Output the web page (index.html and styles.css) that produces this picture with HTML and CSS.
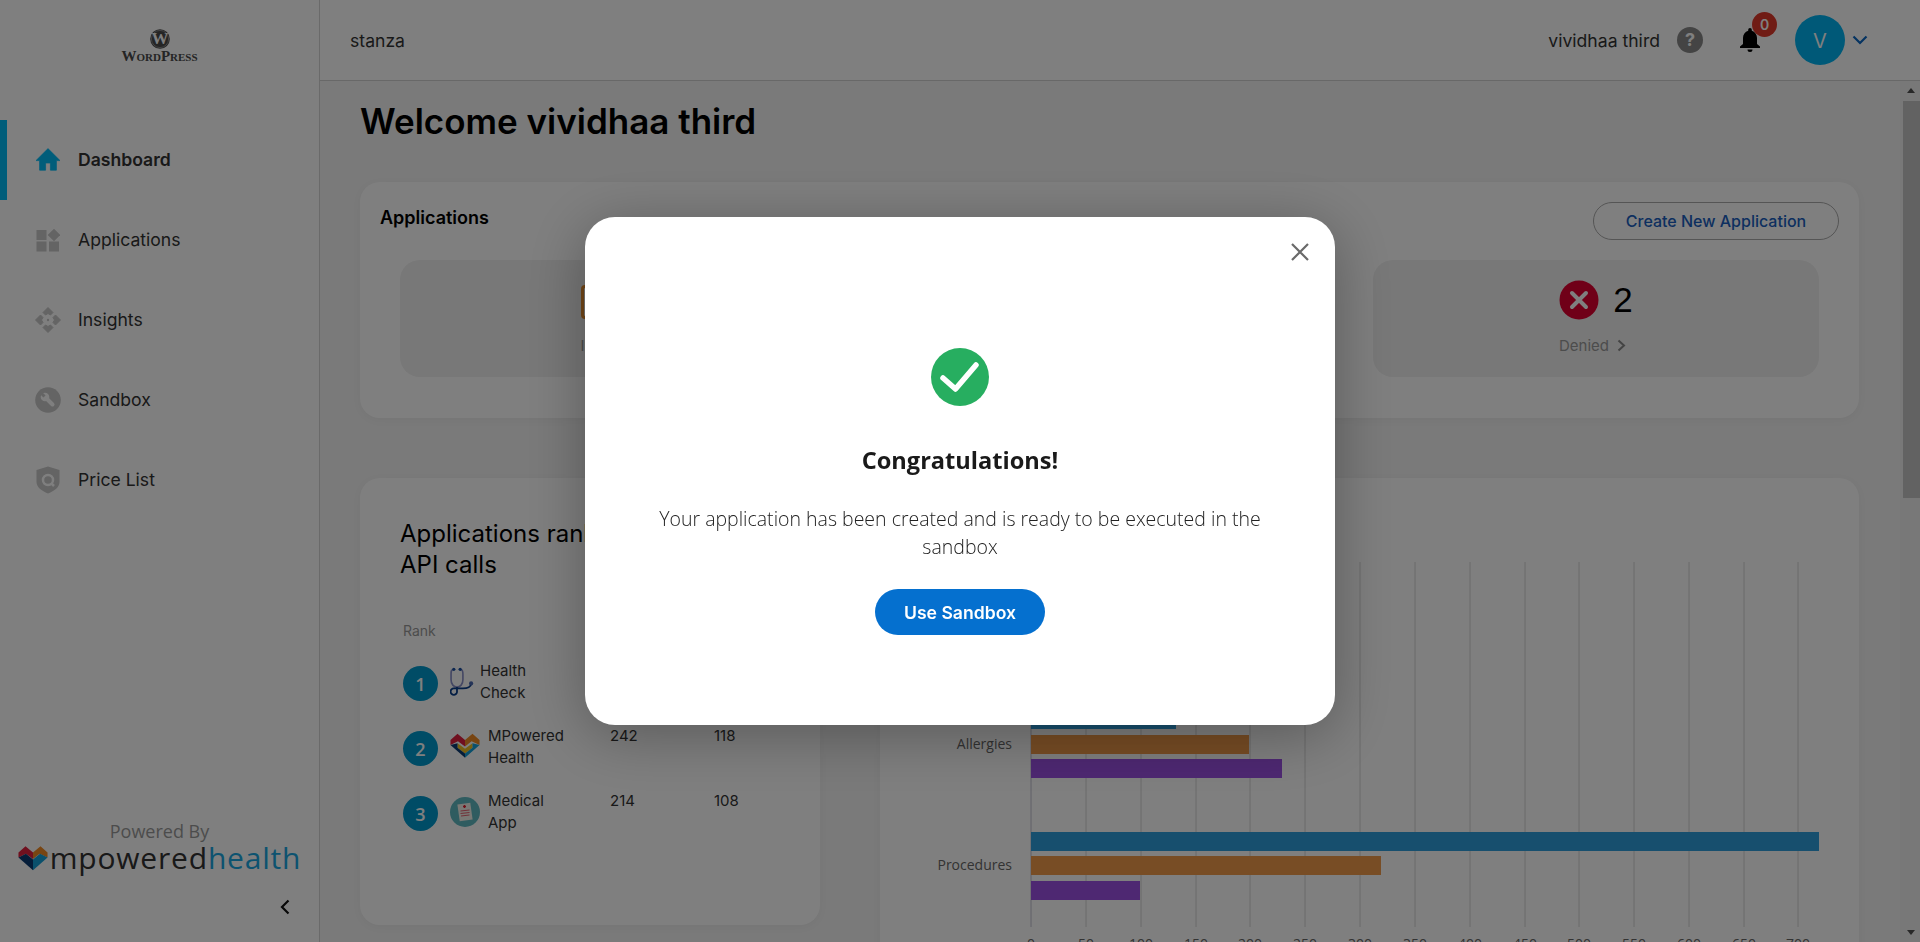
FILE: index.html
```html
<!DOCTYPE html>
<html lang="en">
<head>
    <meta charset="UTF-8">
    <meta name="viewport" content="width=device-width, initial-scale=1.0">
    <title>Dashboard</title>
    <link rel="stylesheet" href="styles.css">
</head>
<body>
    <div class="app">
        <aside class="sidebar">
            <div class="brand">
                <svg class="brand-mark" width="20" height="20" viewBox="0 0 20 20">
                    <circle cx="10" cy="10" r="9.8" fill="#4a4a4a"/>
                    <circle cx="10" cy="10" r="8.6" fill="none" stroke="#a0a0a0" stroke-width="0.7"/>
                    <text x="10" y="15.4" text-anchor="middle" class="brand-w">W</text>
                </svg>
                <span class="brand-name">WordPress</span>
            </div>

            <nav class="nav">
                <a class="nav-item active">
                    <svg class="nav-icon" width="24" height="24" viewBox="2 2 20 20"><path d="M10 20.500v-6h4v6h5v-8h3L12 2.500 2 12.500h3v8z" fill="currentColor" stroke="currentColor" stroke-width="0.6" stroke-linejoin="round"/></svg>
                    <span>Dashboard</span>
                </a>
                <a class="nav-item">
                    <svg class="nav-icon" width="24" height="24" viewBox="0 0 24 24" fill="currentColor">
                        <rect x="0.500" y="2" width="10" height="10"/>
                        <rect x="0.500" y="13.500" width="10" height="10"/>
                        <rect x="13" y="13.500" width="10" height="10"/>
                        <rect x="13.500" y="2.500" width="9" height="9" transform="rotate(45 18 7)"/>
                    </svg>
                    <span>Applications</span>
                </a>
                <a class="nav-item">
                    <svg class="nav-icon wide-icon" width="26" height="26" viewBox="0 0 26 26" fill="currentColor">
                        <path d="M13 0.500 18 5.500 15.500 8 13 6.500 10.500 8 8 5.500z" stroke="currentColor" stroke-linejoin="round"/>
                        <path d="M13 25.500 18 20.500 15.500 18 13 19.500 10.500 18 8 20.500z" stroke="currentColor" stroke-linejoin="round"/>
                        <path d="M0.500 13 5.500 8 8 10.500 6.500 13 8 15.500 5.500 18z" stroke="currentColor" stroke-linejoin="round"/>
                        <path d="M25.500 13 20.500 8 18 10.500 19.500 13 18 15.500 20.500 18z" stroke="currentColor" stroke-linejoin="round"/>
                        <circle cx="13" cy="13" r="1.200"/>
                    </svg>
                    <span>Insights</span>
                </a>
                <a class="nav-item">
                    <svg class="nav-icon wide-icon" width="26" height="26" viewBox="0 0 26 26">
                        <circle cx="13" cy="13" r="12.800" fill="currentColor"/>
                        <path d="M11 11 17.500 17.500" stroke="#fff" stroke-width="4" stroke-linecap="round"/>
                        <circle cx="10" cy="10" r="4.300" fill="#fff"/>
                        <path d="M6 6 9.500 9.500" stroke="currentColor" stroke-width="3"/>
                    </svg>
                    <span>Sandbox</span>
                </a>
                <a class="nav-item">
                    <svg class="nav-icon" width="24" height="28" viewBox="0 0 24 28">
                        <path d="M12 0.500 23.500 4v12c0 5-5 9-11.500 11.500C5.500 25 0.500 21 0.500 16V4z" fill="currentColor"/>
                        <circle cx="12" cy="14" r="5" fill="none" stroke="#fff" stroke-width="2.500"/>
                        <path d="M15.500 17.500 18 20" stroke="#fff" stroke-width="2.500"/>
                    </svg>
                    <span>Price List</span>
                </a>
            </nav>

            <div class="powered">
                <div class="powered-label">Powered By</div>
                <div class="powered-logo">
                    <svg width="30" height="26" viewBox="0 0 32 27">
                        <path d="M0.500 7.500 8 1l8 6.500v7L8.500 9 0.500 13z" fill="#e0203f"/>
                        <path d="M31.500 7.500 24 1l-8 6.500v7l7-5.500 8.500 4z" fill="#f08a24"/>
                        <path d="M0.500 13 8.500 9l7.500 6v11.500z" fill="#0b3a72"/>
                        <path d="M31.500 13 23.500 9l-7.500 6v11.500z" fill="#14a0d8"/>
                    </svg>
                    <span class="logo-dark">mpowered</span><span class="logo-blue">health</span>
                </div>
            </div>
            <div class="collapse">
                <svg width="12" height="16" viewBox="0 0 12 16"><path d="M9.500 1.500 3 8l6.500 6.500" fill="none" stroke="#111" stroke-width="2.200"/></svg>
            </div>
        </aside>

        <div class="right">
            <header class="topbar">
                <span class="org">stanza</span>
                <div class="topbar-right">
                    <span class="user-name">vividhaa third</span>
                    <span class="help">?</span>
                    <span class="bell">
                        <svg width="20" height="26" viewBox="0 0 20 26"><path d="M10 1a1.800 1.800 0 0 1 1.800 1.800v1C15 4.800 17 7.500 17 11v6l3 2.500V21H0v-1.500L3 17v-6c0-3.500 2-6.200 5.200-7.200v-1A1.800 1.800 0 0 1 10 1zM7.500 22.500h5a2.500 2.500 0 0 1-5 0z" fill="#000"/></svg>
                        <span class="badge">0</span>
                    </span>
                    <span class="avatar">V</span>
                    <svg class="avatar-caret" width="16" height="10" viewBox="0 0 16 10"><path d="M1.500 1.500 8 8l6.500-6.500" fill="none" stroke="#0a66c2" stroke-width="2.200"/></svg>
                </div>
            </header>

            <div class="content-wrap">
                <main class="content">
                    <h1>Welcome vividhaa third</h1>

                    <section class="card apps-card">
                        <div class="apps-head">
                            <h2>Applications</h2>
                            <button class="outline-btn">Create New Application</button>
                        </div>
                        <div class="tiles">
                            <div class="tile">
                                <div class="tile-top">
                                    <span class="pending-icon"></span>
                                </div>
                                <div class="tile-label pending-label">In Review
                                    <svg width="9" height="13" viewBox="0 0 9 13"><path d="M1.500 1.500 7 6.500l-5.500 5" fill="none" stroke="#888" stroke-width="2"/></svg>
                                </div>
                            </div>
                            <div class="tile"></div>
                            <div class="tile">
                                <div class="tile-top">
                                    <svg width="40" height="40" viewBox="0 0 40 40">
                                        <circle cx="20" cy="20" r="19.500" fill="#e00030"/>
                                        <path d="M13 13 27 27M27 13 13 27" stroke="#fff" stroke-width="4" stroke-linecap="round"/>
                                    </svg>
                                    <span class="tile-count">2</span>
                                </div>
                                <div class="tile-label denied-label">Denied
                                    <svg width="9" height="13" viewBox="0 0 9 13"><path d="M1.500 1.500 7 6.500l-5.500 5" fill="none" stroke="#888" stroke-width="2"/></svg>
                                </div>
                            </div>
                        </div>
                    </section>

                    <div class="lower">
                        <section class="card rank-card">
                            <h3>Applications ranked by<br>API calls</h3>
                            <div class="rank-head">Rank</div>
                            <div class="rank-row">
                                <span class="rank-num">1</span>
                                <svg class="rank-icon" width="24" height="31" viewBox="0 0 26 34" fill="none">
                                    <path d="M3 3C1 3 1 5 1 8v6c0 5 3 8 6.500 8S14 19 14 14V8c0-3 0-5-2-5" stroke="#8a90c8" stroke-width="1.800"/>
                                    <circle cx="4" cy="2.500" r="1.800" fill="#1a4fa0"/><circle cx="11" cy="2.500" r="1.800" fill="#1a4fa0"/>
                                    <path d="M7.500 22v4.500a3.500 3.500 0 1 1-3.500-3h10c5 0 9-2 9-5" stroke="#0b3f8a" stroke-width="2"/>
                                    <circle cx="23" cy="18" r="2.300" fill="#4a68b0"/>
                                </svg>
                                <span class="rank-name">Health<br>Check</span>
                            </div>
                            <div class="rank-row">
                                <span class="rank-num">2</span>
                                <svg class="rank-icon" width="30" height="27" viewBox="0 0 32 27">
                                    <path d="M0.500 7.500 8 1l8 6.500v7L8.500 9 0.500 13z" fill="#e0203f"/>
                                    <path d="M31.500 7.500 24 1l-8 6.500v7l7-5.500 8.500 4z" fill="#f08a24"/>
                                    <path d="M8 11l8 6 8-6v5l-8 6-8-6z" fill="#f0c020"/>
                                    <path d="M0.500 13 8 11v5l8 6v4.500z" fill="#0b3a72"/>
                                    <path d="M31.500 13 24 11v5l-8 6v4.500z" fill="#14a0d8"/>
                                </svg>
                                <span class="rank-name wide">MPowered<br>Health</span>
                                <span class="rank-val">242</span>
                                <span class="rank-val">118</span>
                            </div>
                            <div class="rank-row">
                                <span class="rank-num">3</span>
                                <svg class="rank-icon" width="30" height="30" viewBox="0 0 30 30">
                                    <circle cx="15" cy="15" r="15" fill="#5fb8c0"/>
                                    <rect x="8.500" y="6.500" width="13" height="17" fill="#f2f2ea" transform="rotate(-8 15 15)"/>
                                    <path d="M13 9.500h3M14.500 8v3" stroke="#e02030" stroke-width="1.300"/>
                                    <path d="M10.500 14l9-1M10.500 16.500l9-1M11 19l8.500-1" stroke="#e05060" stroke-width="0.900"/>
                                </svg>
                                <span class="rank-name wide">Medical<br>App</span>
                                <span class="rank-val">214</span>
                                <span class="rank-val">108</span>
                            </div>
                        </section>

                        <section class="card chart-card">
                            <svg class="chart" width="979" height="500" viewBox="0 0 979 500">
                                <g class="grid">
                                    <line x1="206" x2="206" y1="84" y2="449"/><line x1="261" x2="261" y1="84" y2="449"/>
                                    <line x1="316" x2="316" y1="84" y2="449"/><line x1="370" x2="370" y1="84" y2="449"/>
                                    <line x1="425" x2="425" y1="84" y2="449"/><line x1="480" x2="480" y1="84" y2="449"/>
                                    <line x1="535" x2="535" y1="84" y2="449"/><line x1="590" x2="590" y1="84" y2="449"/>
                                    <line x1="645" x2="645" y1="84" y2="449"/><line x1="699" x2="699" y1="84" y2="449"/>
                                    <line x1="754" x2="754" y1="84" y2="449"/><line x1="809" x2="809" y1="84" y2="449"/>
                                    <line x1="864" x2="864" y1="84" y2="449"/><line x1="918" x2="918" y1="84" y2="449"/>
                                </g>
                                <line class="axis" x1="151" x2="151" y1="84" y2="449"/>
                                <rect class="bar-blue" x="151" y="232" width="145" height="19"/>
                                <rect class="bar-orange" x="151" y="257" width="218" height="19"/>
                                <rect class="bar-purple" x="151" y="281" width="251" height="19"/>
                                <rect class="bar-blue" x="151" y="354" width="788" height="19"/>
                                <rect class="bar-orange" x="151" y="378" width="350" height="19"/>
                                <rect class="bar-purple" x="151" y="403" width="109" height="19"/>
                                <text class="cat" x="132" y="271" text-anchor="end">Allergies</text>
                                <text class="cat" x="132" y="392" text-anchor="end">Procedures</text>
                                <g class="tick" text-anchor="middle">
                                    <text x="151" y="471">0</text><text x="206" y="471">50</text><text x="261" y="471">100</text>
                                    <text x="316" y="471">150</text><text x="370" y="471">200</text><text x="425" y="471">250</text>
                                    <text x="480" y="471">300</text><text x="535" y="471">350</text><text x="590" y="471">400</text>
                                    <text x="645" y="471">450</text><text x="699" y="471">500</text><text x="754" y="471">550</text>
                                    <text x="809" y="471">600</text><text x="864" y="471">650</text><text x="918" y="471">700</text>
                                </g>
                            </svg>
                        </section>
                    </div>
                </main>

                <div class="scrollbar">
                    <span class="arrow-up"></span>
                    <div class="thumb"></div>
                    <span class="arrow-down"></span>
                </div>
            </div>
        </div>
    </div>

    <div class="overlay">
        <div class="modal">
            <button class="modal-close">
                <svg width="20" height="20" viewBox="0 0 20 20"><path d="M2 2 18 18M18 2 2 18" stroke="#6a6a6a" stroke-width="2.200"/></svg>
            </button>
            <svg class="modal-check" width="58" height="58" viewBox="0 0 58 58">
                <circle cx="29" cy="29" r="29" fill="#27ae60"/>
                <path d="M12 30 24.500 41 45 17" fill="none" stroke="#fff" stroke-width="5.500" stroke-linecap="round" stroke-linejoin="round"/>
            </svg>
            <h2 class="modal-title">Congratulations!</h2>
            <p class="modal-text">Your application has been created and is ready to be executed in the sandbox</p>
            <button class="primary-btn">Use Sandbox</button>
        </div>
    </div>
</body>
</html>
```

FILE: styles.css
```css
* {
    box-sizing: border-box;
}
html, body {
    margin: 0;
    height: 100%;
    overflow: hidden;
}
body {
    font-family: Inter, "Noto Sans", sans-serif;
    color: #333;
    background: #f4f4f4;
}
h1, h2, h3, p {
    margin: 0;
}
.app {
    display: flex;
    height: 100vh;
}

/* sidebar */
.sidebar {
    width: 320px;
    flex: none;
    background: #fff;
    border-right: 1px solid #d4d4d4;
    display: flex;
    flex-direction: column;
}
.brand {
    height: 120px;
    padding-top: 29px;
    display: flex;
    flex-direction: column;
    align-items: center;
}
.brand-w {
    font-family: "Liberation Serif", serif;
    font-size: 17px;
    font-weight: bold;
    fill: #fff;
}
.brand-name {
    font-family: "Liberation Serif", serif;
    font-variant: small-caps;
    font-weight: bold;
    font-size: 15px;
    line-height: 15px;
    color: #4a4a4a;
}
.nav-item {
    height: 80px;
    padding-left: 29px;
    display: grid;
    grid-template-columns: 42px auto;
    align-items: center;
    font-size: 17.600px;
    color: #333;
    border-left: 7px solid transparent;
}
.nav-item span {
    margin-top: -2px;
}
.nav-item.active {
    border-left-color: #00bbf5;
    font-weight: 600;
}
.nav-icon {
    color: #c8c8c8;
}
.wide-icon {
    margin-left: -1px;
}
.nav-item.active .nav-icon {
    color: #00bbf5;
}
.powered {
    margin-top: auto;
    text-align: center;
}
.powered-label {
    font-family: "Open Sans", sans-serif;
    font-size: 18px;
    line-height: 20px;
    color: #999;
}
.powered-logo {
    display: flex;
    align-items: center;
    justify-content: center;
    height: 34px;
    font-family: "Open Sans", sans-serif;
    font-size: 30px;
    font-weight: 500;
    letter-spacing: 0.8px;
    line-height: 34px;
}
.logo-dark {
    color: #333;
    margin-left: 2px;
}
.logo-blue {
    color: #1aa6e0;
}
.collapse {
    height: 67px;
    padding: 24px 28px 0 0;
    text-align: right;
}

/* top bar */
.right {
    flex: 1;
    min-width: 0;
    display: flex;
    flex-direction: column;
}
.topbar {
    height: 81px;
    flex: none;
    background: #fff;
    border-bottom: 1px solid #d0d0d0;
    padding: 0 52px 0 30px;
    display: flex;
    align-items: center;
    justify-content: space-between;
    font-size: 17.600px;
    color: #333;
}
.topbar-right {
    display: flex;
    align-items: center;
}
.help {
    width: 26px;
    height: 26px;
    margin-left: 17px;
    border-radius: 50%;
    background: #888;
    color: #fff;
    font-weight: 700;
    font-size: 18px;
    text-align: center;
    line-height: 26px;
}
.bell {
    position: relative;
    margin-left: 37px;
    height: 26px;
}
.badge {
    position: absolute;
    left: 12px;
    top: -15px;
    width: 25px;
    height: 25px;
    border-radius: 50%;
    background: #e0392b;
    color: #fff;
    font-size: 14px;
    font-weight: 600;
    text-align: center;
    line-height: 25px;
}
.avatar {
    width: 50px;
    height: 50px;
    margin-left: 35px;
    border-radius: 50%;
    background: #00b2f0;
    color: #fff;
    font-size: 20px;
    text-align: center;
    line-height: 52px;
}
.avatar-caret {
    margin-left: 7px;
}

/* main content */
.content-wrap {
    flex: 1;
    min-height: 0;
    display: flex;
}
.content {
    flex: 1;
    min-width: 0;
    overflow: hidden;
    padding: 18px 41px 0 40px;
}
h1 {
    font-size: 35px;
    line-height: 44px;
    font-weight: 600;
    color: #000;
    margin-bottom: 39px;
}
.card {
    background: #fff;
    border-radius: 20px;
    box-shadow: 0 2px 10px rgba(0,0,0,0.04);
}
.apps-card {
    padding: 20px 40px 41px;
    height: 236px;
}
.apps-head {
    height: 37px;
    margin: 0 -20px 21px -20px;
    display: flex;
    align-items: flex-start;
    justify-content: space-between;
}
.apps-head h2 {
    font-size: 18px;
    line-height: 32px;
    font-weight: 600;
    color: #000;
}
.outline-btn {
    width: 246px;
    height: 38px;
    border: 1px solid #aaa;
    border-radius: 19px;
    background: transparent;
    font-family: inherit;
    font-size: 16px;
    font-weight: 500;
    color: #1a5fc0;
}
.tiles {
    display: grid;
    grid-template-columns: repeat(3, 446px);
    column-gap: 40.500px;
}
.tile {
    height: 117px;
    border-radius: 20px;
    background: #f0f0f0;
    padding-top: 20px;
    display: flex;
    flex-direction: column;
    align-items: center;
}
.tile-top {
    display: flex;
    align-items: center;
    gap: 14px;
    height: 40px;
}
.pending-icon {
    width: 40px;
    height: 34px;
    margin-top: 4px;
    margin-right: 44px;
    border: 3px solid #e89030;
    border-radius: 4px;
}
.tile-count {
    font-size: 35px;
    font-family: "Liberation Sans", sans-serif;
    color: #000;
}
.tile-label {
    margin-top: 16px;
    font-size: 15px;
    color: #999;
    display: flex;
    align-items: center;
    gap: 8px;
}
.denied-label {
    margin-left: -7px;
}
.lower {
    display: grid;
    grid-template-columns: 460px 979px;
    column-gap: 60px;
    align-items: start;
    margin-top: 60px;
}
.rank-card {
    height: 447px;
    padding: 40px 40px 0 40px;
}
.rank-card h3 {
    font-size: 24px;
    line-height: 31px;
    font-weight: 400;
    color: #000;
    white-space: nowrap;
}
.rank-head {
    font-size: 14px;
    line-height: 20px;
    color: #999;
    margin-top: 41px;
    margin-left: 3px;
    margin-bottom: 14px;
}
.rank-row {
    height: 65px;
    margin-left: 3px;
    display: flex;
    align-items: flex-start;
    font-size: 15px;
    line-height: 22px;
    color: #333;
}
.rank-num {
    width: 35px;
    height: 35px;
    flex: none;
    border-radius: 50%;
    background: #0098cc;
    color: #fff;
    font-family: "Open Sans", sans-serif;
    font-size: 18px;
    font-weight: 600;
    text-align: center;
    line-height: 36px;
    margin-top: 11px;
}
.rank-icon {
    flex: none;
    margin: 12px 0 0 12px;
}
.rank-name {
    flex: none;
    width: 100px;
    padding-left: 6px;
    margin-top: 5px;
}
.rank-name.wide {
    padding-left: 8px;
    width: 130px;
}
.rank-val {
    flex: none;
    width: 104px;
    margin-top: 5px;
}
.chart-card {
    height: 500px;
}
.chart {
    display: block;
}
.grid line {
    stroke: #d4d4d4;
    stroke-width: 1;
}
.axis {
    stroke: #c0c0d0;
    stroke-width: 1;
}
.bar-blue {
    fill: #2f9fdc;
}
.bar-orange {
    fill: #f09a4a;
}
.bar-purple {
    fill: #9c50e4;
}
.cat, .tick {
    font-family: "Open Sans", sans-serif;
    font-size: 14px;
    fill: #666;
}

/* fake browser scrollbar */
.scrollbar {
    width: 20px;
    flex: none;
    background: #f1f1f1;
    display: flex;
    flex-direction: column;
    align-items: center;
    padding-top: 7px;
}
.arrow-up {
    border: 4px solid transparent;
    border-top: 0;
    border-bottom: 5px solid #505050;
    margin-left: 2px;
}
.thumb {
    width: 17px;
    height: 397px;
    margin-top: 8px;
    margin-left: 2px;
    background: #c4c4c4;
}
.arrow-down {
    margin-top: auto;
    margin-bottom: 7px;
    margin-left: 2px;
    border: 4px solid transparent;
    border-bottom: 0;
    border-top: 5px solid #505050;
}

/* modal */
.overlay {
    position: fixed;
    inset: 0;
    background: rgba(0,0,0,0.5);
    display: flex;
    align-items: flex-start;
    justify-content: center;
    padding-top: 217px;
}
.modal {
    position: relative;
    width: 750px;
    height: 508px;
    background: #fff;
    border-radius: 30px;
    box-shadow: 0 10px 60px rgba(0,0,0,0.3);
    padding-top: 131px;
    text-align: center;
}
.modal-close {
    position: absolute;
    top: 25px;
    right: 25px;
    padding: 0;
    border: none;
    background: none;
    line-height: 0;
}
.modal-check {
    display: block;
    margin: 0 auto;
}
.modal-title {
    margin-top: 36px;
    font-family: "Open Sans", sans-serif;
    font-size: 23.600px;
    line-height: 36px;
    font-weight: 700;
    color: #1a1a1a;
}
.modal-text {
    width: 640px;
    margin: 27px auto 0;
    font-family: "Open Sans", sans-serif;
    font-size: 19.500px;
    line-height: 28px;
    font-weight: 300;
    color: #222;
}
.primary-btn {
    width: 170px;
    height: 46px;
    margin-top: 28px;
    border: none;
    border-radius: 23px;
    background: #0570cf;
    color: #fff;
    font-family: Inter, sans-serif;
    font-size: 17.600px;
    font-weight: 600;
}
```
